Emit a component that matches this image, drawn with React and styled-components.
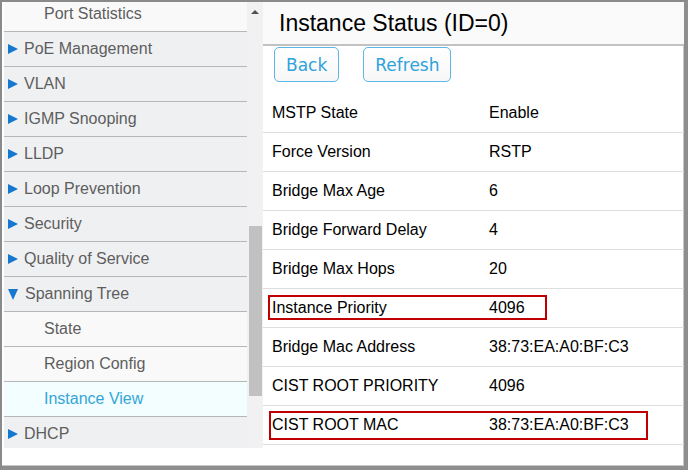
import React from "react";
import styled, { createGlobalStyle } from "styled-components";

const GlobalStyle = createGlobalStyle`
  html, body {
    margin: 0;
    padding: 0;
    background: #ffffff;
  }
  body {
    font-family: "Liberation Sans", Arial, sans-serif;
  }
`;

const Frame = styled.div`
  box-sizing: border-box;
  width: 688px;
  height: 470px;
  display: flex;
  border-top: 2px solid #8a8a8a;
  border-left: 2px solid #8a8a8a;
  border-right: 4px solid #8e8e8e;
  border-bottom: 4px solid #8e8e8e;
  box-shadow: inset -1px -1px 0 #c8c8c8;
  background: #fff;
  overflow: hidden;
`;

const Sidebar = styled.aside`
  width: 261px;
  flex: none;
  display: flex;
  flex-direction: column;
  padding-left: 2px;
  box-sizing: border-box;
`;

const ScrollArea = styled.div`
  height: 446px;
  display: flex;
  overflow: hidden;
`;

const Menu = styled.ul`
  list-style: none;
  margin: -5px 0 0 0;
  padding: 0;
  width: 243px;
  flex: none;
`;

const Item = styled.li`
  box-sizing: border-box;
  height: 35px;
  display: flex;
  align-items: center;
  border-bottom: 1px solid #b6b6b6;
  padding-left: ${(p) => (p.$sub ? "40px" : "4px")};
  background: ${(p) => (p.$active ? "#f2feff" : p.$sub ? "#f9f9f9" : "#eff0f2")};
  color: ${(p) => (p.$active ? "#35a5d8" : "#5e5e5e")};
  font-size: 16px;
  white-space: nowrap;
`;

/* blue expand/collapse triangle */
const Arrow = styled.span`
  flex: none;
  width: 0;
  height: 0;
  margin-right: ${(p) => (p.$open ? "7px" : "6px")};
  ${(p) =>
    p.$open
      ? `
    border-left: 5px solid transparent;
    border-right: 5px solid transparent;
    border-top: 11px solid #1677cf;
    margin-left: 0;
  `
      : `
    border-top: 5px solid transparent;
    border-bottom: 5px solid transparent;
    border-left: 10px solid #1677cf;
    margin-left: 0;
  `}
`;

const Scrollbar = styled.div`
  width: 16px;
  flex: none;
  background: #f1f1f1;
  display: flex;
  flex-direction: column;
  align-items: center;
`;

const ScrollUp = styled.div`
  margin-top: 8px;
  width: 0;
  height: 0;
  border-left: 4px solid transparent;
  border-right: 4px solid transparent;
  border-bottom: 4px solid #505050;
`;

const Thumb = styled.div`
  margin-top: 212px;
  width: 13px;
  height: 170px;
  background: #c1c1c1;
`;

const Main = styled.main`
  flex: 1;
  display: flex;
  flex-direction: column;
  min-width: 0;
`;

const Header = styled.header`
  height: 42px;
  background: #fafafa;
  border-bottom: 2px solid #c2c2c2;
  display: flex;
  align-items: center;
  padding-left: 16px;
`;

const Title = styled.h1`
  margin: 0;
  font-size: 23px;
  font-weight: normal;
  color: #000;
`;

const Toolbar = styled.div`
  display: flex;
  gap: 24px;
  padding: 1px 0 0 11px;
  margin-bottom: 12px;
`;

const Button = styled.button`
  box-sizing: border-box;
  height: 35px;
  padding: 0 11px;
  border: 1px solid #5cb6e6;
  border-radius: 5px;
  background: linear-gradient(#ffffff, #f7f7f7);
  color: #2ea2dc;
  font-family: "DejaVu Sans", Verdana, sans-serif;
  font-size: 17px;
  cursor: pointer;
`;

const Table = styled.div`
  display: flex;
  flex-direction: column;
`;

const Row = styled.div`
  position: relative;
  box-sizing: border-box;
  height: 39px;
  display: grid;
  grid-template-columns: 217px 1fr;
  align-items: center;
  padding-left: 9px;
  border-bottom: 1px solid #dedede;
  font-size: 16px;
  color: #000;
`;

const Mark = styled.span`
  position: absolute;
  left: ${(p) => p.$left}px;
  top: ${(p) => p.$top}px;
  width: ${(p) => p.$width}px;
  height: ${(p) => p.$height}px;
  box-sizing: border-box;
  border: 2px solid #c00000;
  pointer-events: none;
`;

const menu = [
  { label: "Port Statistics", sub: true },
  { label: "PoE Management" },
  { label: "VLAN" },
  { label: "IGMP Snooping" },
  { label: "LLDP" },
  { label: "Loop Prevention" },
  { label: "Security" },
  { label: "Quality of Service" },
  { label: "Spanning Tree", open: true },
  { label: "State", sub: true },
  { label: "Region Config", sub: true },
  { label: "Instance View", sub: true, active: true },
  { label: "DHCP" },
];

const rows = [
  ["MSTP State", "Enable"],
  ["Force Version", "RSTP"],
  ["Bridge Max Age", "6"],
  ["Bridge Forward Delay", "4"],
  ["Bridge Max Hops", "20"],
  ["Instance Priority", "4096", { left: 5, top: 6, width: 279, height: 25 }],
  ["Bridge Mac Address", "38:73:EA:A0:BF:C3"],
  ["CIST ROOT PRIORITY", "4096"],
  ["CIST ROOT MAC", "38:73:EA:A0:BF:C3", { left: 6, top: 5, width: 379, height: 29 }],
];

export default function App() {
  return (
    <>
      <GlobalStyle />
      <Frame>
        <Sidebar>
          <ScrollArea>
            <Menu>
              {menu.map((m) => (
                <Item key={m.label} $sub={m.sub} $active={m.active}>
                  {!m.sub && <Arrow $open={m.open} />}
                  {m.label}
                </Item>
              ))}
            </Menu>
            <Scrollbar>
              <ScrollUp />
              <Thumb />
            </Scrollbar>
          </ScrollArea>
        </Sidebar>
        <Main>
          <Header>
            <Title>Instance Status (ID=0)</Title>
          </Header>
          <Toolbar>
            <Button>Back</Button>
            <Button>Refresh</Button>
          </Toolbar>
          <Table>
            {rows.map(([label, value, mark]) => (
              <Row key={label}>
                <span>{label}</span>
                <span>{value}</span>
                {mark && (
                  <Mark
                    $left={mark.left}
                    $top={mark.top}
                    $width={mark.width}
                    $height={mark.height}
                  />
                )}
              </Row>
            ))}
          </Table>
        </Main>
      </Frame>
    </>
  );
}
